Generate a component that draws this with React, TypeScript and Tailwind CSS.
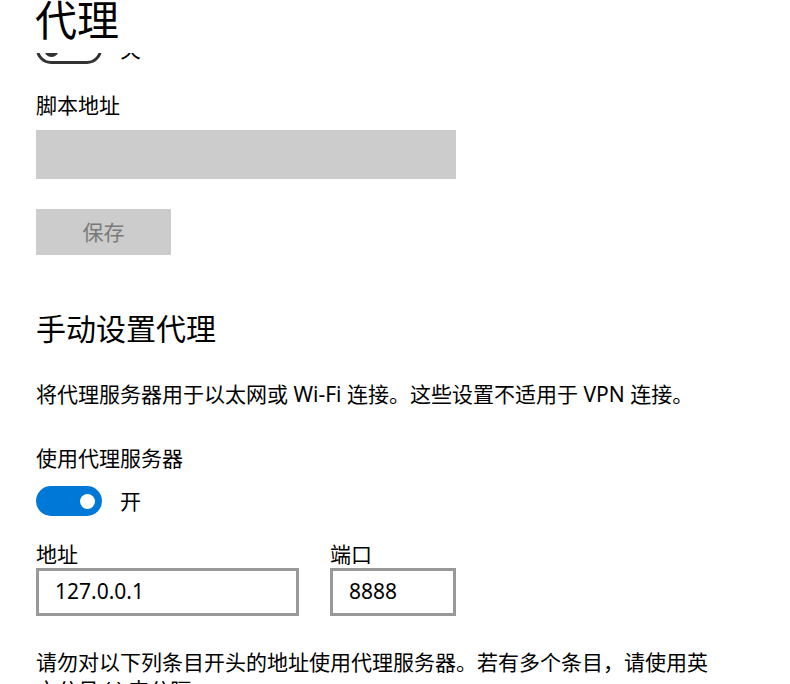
import React from "react";

const font = "font-['Noto_Sans','Noto_Sans_CJK_SC',sans-serif]";

function Toggle({ on }: { on: boolean }) {
  if (on) {
    return (
      <div className="w-[66px] h-[30px] rounded-full bg-[#0078d7] flex items-center justify-end pr-[7px]">
        <div className="w-[15px] h-[15px] rounded-full bg-white" />
      </div>
    );
  }
  return (
    <div className="w-[66px] h-[30px] rounded-full border-[3px] border-[#333333] bg-white flex items-center pl-[5px]">
      <div className="w-[15px] h-[15px] rounded-full bg-[#333333]" />
    </div>
  );
}

export default function App() {
  return (
    <div className={`relative w-[790px] h-[684px] overflow-hidden bg-white text-black ${font}`}>
      {/* Page header, stays over the scrolled content */}
      <div className="absolute top-0 left-0 right-0 h-[53px] bg-white z-10">
        <h1 className="ml-[35px] mt-[-1px] text-[42px] leading-[42px] font-normal">代理</h1>
      </div>

      {/* Scrolled content */}
      <div className="pl-[36px] pt-[34px] w-[716px]">
        <div className="flex items-center gap-[18px] h-[30px]">
          <Toggle on={false} />
          <span className="text-[21px] leading-[30px]">关</span>
        </div>

        <div className="mt-[27px] text-[21px] leading-[28px]">脚本地址</div>
        <div className="mt-[11px] w-[420px] h-[49px] bg-[#cccccc]" />

        <button className="mt-[30px] w-[135px] h-[46px] bg-[#cccccc] text-[#7a7a7a] text-[21px] leading-[46px]">
          保存
        </button>

        <h2 className="mt-[54px] text-[30px] leading-[40px] font-normal">手动设置代理</h2>

        <p className="mt-[31px] text-[21px] leading-[28px]">
          将代理服务器用于以太网或 Wi-Fi 连接。这些设置不适用于 VPN 连接。
        </p>

        <div className="mt-[36px] text-[21px] leading-[28px]">使用代理服务器</div>
        <div className="mt-[14px] flex items-center gap-[18px] h-[30px]">
          <Toggle on={true} />
          <span className="text-[21px] leading-[30px]">开</span>
        </div>

        <div className="mt-[24px] flex gap-[31px]">
          <div className="flex flex-col">
            <span className="text-[21px] leading-[28px]">地址</span>
            <div className="w-[263px] h-[48px] border-[3px] border-[#999999] flex items-center pl-[16px] text-[21px]">
              127.0.0.1
            </div>
          </div>
          <div className="flex flex-col">
            <span className="text-[21px] leading-[28px]">端口</span>
            <div className="w-[126px] h-[48px] border-[3px] border-[#999999] flex items-center pl-[16px] text-[21px]">
              8888
            </div>
          </div>
        </div>

        <p className="mt-[32px] w-[680px] text-[21px] leading-[28px]">
          请勿对以下列条目开头的地址使用代理服务器。若有多个条目，请使用英文分号 (;) 来分隔。
        </p>
      </div>
    </div>
  );
}
